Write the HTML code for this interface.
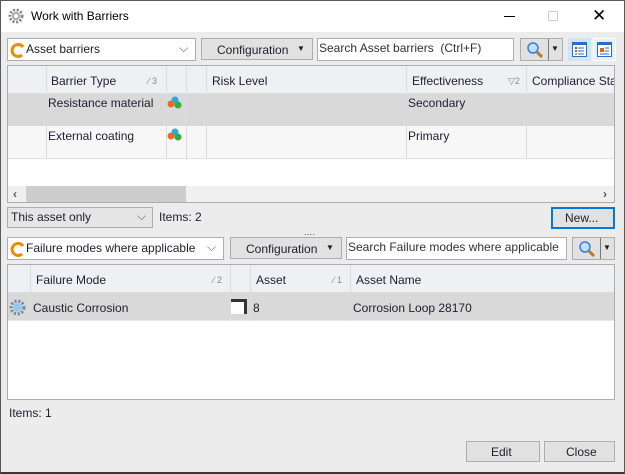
<!DOCTYPE html>
<html><head><meta charset="utf-8"><style>
*{box-sizing:border-box;margin:0;padding:0}
body{width:625px;height:474px;overflow:hidden;background:#ececec;font-family:"Liberation Sans",sans-serif;font-size:12px;color:#1e1e2e;position:relative}
.a{position:absolute}
.win{left:0;top:0;width:625px;height:474px;border:1px solid #5a5a5a;border-bottom:2px solid #3a3a3a}
.title{left:1px;top:1px;width:623px;height:31px;background:#fff}
.box{background:#fff;border:1px solid #adadad}
.btn{background:#e1e1e1;border:1px solid #adadad;text-align:center}
.t{white-space:nowrap;position:absolute}
.vl{position:absolute;width:1px;background:#dcdcdc}
.hdr{background:#eef0f3}
.sort{position:absolute;font-size:9px;color:#888}
</style></head><body>
<div class="a win"></div>
<div class="a title"></div>
<svg class="a" style="left:8px;top:8px" width="16" height="16" viewBox="0 0 16 16"><circle cx="8" cy="8" r="6" fill="none" stroke="#888" stroke-width="3" stroke-dasharray="2 1.6"/><circle cx="8" cy="8" r="4" fill="#aaa"/><circle cx="8" cy="8" r="2" fill="#fff"/></svg>
<div class="t" style="left:31px;top:9px;font-size:12px;color:#000">Work with Barriers</div>
<div class="a" style="left:504px;top:16px;width:11px;height:1px;background:#000"></div>
<div class="a" style="left:548px;top:11px;width:10px;height:10px;border:1px solid #ccc"></div>
<div class="t" style="left:592px;top:6px;font-size:17px;color:#000">✕</div>

<!-- toolbar 1 -->
<div class="a box" style="left:7px;top:38px;width:189px;height:23px"></div>
<svg class="a" style="left:10px;top:42px" width="16" height="16" viewBox="0 0 16 16"><path d="M13 5A6 6 0 1 0 12 13" fill="none" stroke="#f08a00" stroke-width="3"/></svg>
<div class="t" style="left:26px;top:42px">Asset barriers</div>
<div class="t" style="left:179px;top:41px;color:#666">⌵</div>
<div class="a btn" style="left:201px;top:38px;width:112px;height:22px"></div>
<div class="t" style="left:217px;top:43px">Configuration</div>
<div class="t" style="left:297px;top:44px;font-size:8px">▼</div>
<div class="a box" style="left:317px;top:38px;width:197px;height:23px"></div>
<div class="t" style="left:319px;top:41px;color:#333">Search Asset barriers&nbsp; (Ctrl+F)</div>
<div class="a btn" style="left:520px;top:38px;width:43px;height:23px"></div>
<div class="a" style="left:548px;top:39px;width:1px;height:21px;background:#777"></div>
<svg class="a" style="left:526px;top:41px" width="18" height="18" viewBox="0 0 18 18"><circle cx="7" cy="7" r="5" fill="#bfe0ff" stroke="#3a7bd5" stroke-width="1.5"/><path d="M11 11L16 16" stroke="#c07a20" stroke-width="3"/></svg>
<div class="t" style="left:551px;top:44px;font-size:8px">▼</div>
<div class="a" style="left:568px;top:38px;width:23px;height:23px;background:#cde6fb"></div>
<svg class="a" style="left:572px;top:42px" width="15" height="15" viewBox="0 0 15 15"><rect x=".5" y=".5" width="14" height="14" fill="#fff" stroke="#2b6cc4"/><rect x="1" y="1" width="13" height="2" fill="#2b6cc4"/><rect x="3" y="5" width="2" height="2" fill="#d33"/><rect x="3" y="8" width="2" height="2" fill="#3a3"/><rect x="3" y="11" width="2" height="2" fill="#e90"/><path d="M6 6h6M6 9h6M6 12h6" stroke="#2b6cc4"/></svg>
<div class="a" style="left:593px;top:38px;width:23px;height:23px;background:#e8eef5;border:1px solid #fff"></div>
<svg class="a" style="left:597px;top:42px" width="15" height="15" viewBox="0 0 15 15"><rect x=".5" y=".5" width="14" height="14" fill="#fff" stroke="#2b6cc4"/><rect x="1" y="1" width="13" height="2" fill="#2b6cc4"/><rect x="3" y="6" width="4" height="4" fill="#d46a1a"/><path d="M8 6h4M8 9h4M3 12h9" stroke="#2b6cc4"/></svg>

<!-- table 1 -->
<div class="a" style="left:7px;top:65px;width:608px;height:138px;background:#fff;border:1px solid #adadad;overflow:hidden">
 <div class="a hdr" style="left:0;top:0;width:606px;height:28px;border-bottom:1px solid #dcdcdc"></div>
 <div class="a" style="left:0;top:28px;width:606px;height:32px;background:#d9d9d9"></div>
 <div class="a" style="left:0;top:60px;width:606px;height:33px;background:#f7f7f7;border-bottom:1px solid #e2e2e2"></div>
 <div class="vl" style="left:38px;top:0;height:94px"></div>
 <div class="vl" style="left:158px;top:0;height:94px"></div>
 <div class="vl" style="left:178px;top:0;height:94px"></div>
 <div class="vl" style="left:198px;top:0;height:94px"></div>
 <div class="vl" style="left:398px;top:0;height:94px"></div>
 <div class="vl" style="left:518px;top:0;height:94px"></div>
 <div class="t" style="left:43px;top:8px">Barrier Type</div><div class="sort" style="left:140px;top:10px">∕ 3</div>
 <div class="t" style="left:204px;top:8px">Risk Level</div>
 <div class="t" style="left:404px;top:8px">Effectiveness</div><div class="sort" style="left:500px;top:10px">▽2</div>
 <div class="t" style="left:524px;top:8px">Compliance Statu</div>
 <div class="t" style="left:40px;top:30px">Resistance material</div>
 <div class="t" style="left:400px;top:30px">Secondary</div>
 <div class="t" style="left:40px;top:63px">External coating</div>
 <div class="t" style="left:400px;top:63px">Primary</div>
 <svg class="a" style="left:159px;top:30px" width="15" height="13"><circle cx="8" cy="4" r="3.5" fill="#2aa8e8"/><circle cx="4" cy="8" r="3.5" fill="#ea6a2a"/><circle cx="11" cy="9" r="3.5" fill="#2cb040"/></svg>
 <svg class="a" style="left:159px;top:62px" width="15" height="13"><circle cx="8" cy="4" r="3.5" fill="#2aa8e8"/><circle cx="4" cy="8" r="3.5" fill="#ea6a2a"/><circle cx="11" cy="9" r="3.5" fill="#2cb040"/></svg>
 <div class="a" style="left:0;top:120px;width:606px;height:17px;background:#f0f0f0"></div>
 <div class="a" style="left:18px;top:120px;width:160px;height:16px;background:#cdcdcd"></div>
 <div class="t" style="left:5px;top:121px;font-weight:bold;color:#555">‹</div>
 <div class="t" style="left:595px;top:121px;font-weight:bold;color:#555">›</div>
</div>

<div class="a box" style="left:7px;top:207px;width:146px;height:21px;background:#e5e5e5"></div>
<div class="t" style="left:11px;top:210px">This asset only</div>
<div class="t" style="left:137px;top:209px;color:#666">⌵</div>
<div class="t" style="left:159px;top:210px">Items: 2</div>
<div class="a btn" style="left:551px;top:207px;width:64px;height:22px;border:2px solid #0078d7"></div>
<div class="t" style="left:565px;top:211px">New...</div>
<div class="t" style="left:304px;top:227px;font-size:10px;color:#555">....</div>

<!-- toolbar 2 -->
<div class="a box" style="left:7px;top:237px;width:217px;height:23px"></div>
<svg class="a" style="left:10px;top:241px" width="16" height="16" viewBox="0 0 16 16"><path d="M13 5A6 6 0 1 0 12 13" fill="none" stroke="#f08a00" stroke-width="3"/></svg>
<div class="t" style="left:26px;top:241px">Failure modes where applicable</div>
<div class="t" style="left:207px;top:240px;color:#666">⌵</div>
<div class="a btn" style="left:230px;top:237px;width:112px;height:22px"></div>
<div class="t" style="left:246px;top:242px">Configuration</div>
<div class="t" style="left:326px;top:243px;font-size:8px">▼</div>
<div class="a box" style="left:346px;top:237px;width:221px;height:23px"></div>
<div class="a" style="left:348px;top:240px;width:217px;height:16px;overflow:hidden"><div class="t" style="left:0;top:0;color:#333">Search Failure modes where applicable&nbsp; (Ctrl+F)</div></div>
<div class="a btn" style="left:572px;top:237px;width:43px;height:23px"></div>
<div class="a" style="left:600px;top:238px;width:1px;height:21px;background:#777"></div>
<svg class="a" style="left:578px;top:240px" width="18" height="18" viewBox="0 0 18 18"><circle cx="7" cy="7" r="5" fill="#bfe0ff" stroke="#3a7bd5" stroke-width="1.5"/><path d="M11 11L16 16" stroke="#c07a20" stroke-width="3"/></svg>
<div class="t" style="left:603px;top:243px;font-size:8px">▼</div>

<!-- table 2 -->
<div class="a" style="left:7px;top:264px;width:608px;height:136px;background:#fff;border:1px solid #adadad;overflow:hidden">
 <div class="a hdr" style="left:0;top:0;width:606px;height:28px;border-bottom:1px solid #dcdcdc"></div>
 <div class="a" style="left:0;top:28px;width:606px;height:28px;background:#d9d9d9;border-bottom:1px solid #e8e8e8"></div>
 <div class="vl" style="left:22px;top:0;height:56px"></div>
 <div class="vl" style="left:222px;top:0;height:56px"></div>
 <div class="vl" style="left:242px;top:0;height:56px"></div>
 <div class="vl" style="left:342px;top:0;height:56px"></div>
 <div class="t" style="left:28px;top:8px">Failure Mode</div><div class="sort" style="left:205px;top:10px">∕ 2</div>
 <div class="t" style="left:248px;top:8px">Asset</div><div class="sort" style="left:325px;top:10px">∕ 1</div>
 <div class="t" style="left:348px;top:8px">Asset Name</div>
 <svg class="a" style="left:1px;top:34px" width="17" height="17" viewBox="0 0 16 16"><circle cx="8" cy="8" r="6" fill="none" stroke="#7a8aa0" stroke-width="3" stroke-dasharray="2 1.6"/><circle cx="8" cy="8" r="4" fill="#8fc8f0"/></svg>
 <div class="t" style="left:25px;top:36px">Caustic Corrosion</div>
 <div class="a" style="left:223px;top:34px;width:16px;height:15px;background:#fff;border-top:3px solid #333;border-right:3px solid #333"></div>
 <div class="t" style="left:245px;top:36px">8</div>
 <div class="t" style="left:345px;top:36px">Corrosion Loop 28170</div>
</div>

<div class="t" style="left:9px;top:406px">Items: 1</div>
<div class="a btn" style="left:466px;top:441px;width:74px;height:21px"></div>
<div class="t" style="left:491px;top:445px">Edit</div>
<div class="a btn" style="left:544px;top:441px;width:71px;height:21px"></div>
<div class="t" style="left:566px;top:445px">Close</div>
</body></html>
